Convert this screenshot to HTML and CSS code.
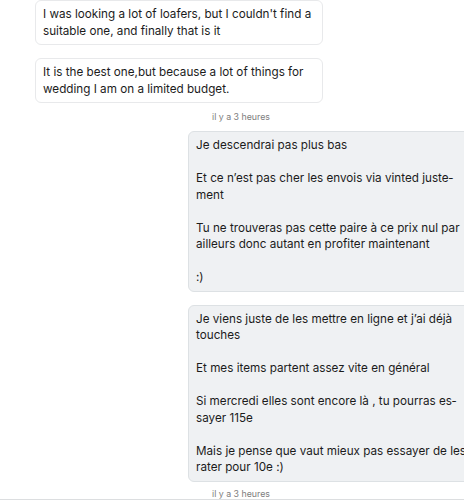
FILE: index.html
```html
<!DOCTYPE html>
<html lang="fr">
<head>
    <meta charset="UTF-8">
    <meta name="viewport" content="width=device-width, initial-scale=1.0">
    <title>Conversation</title>
    <link rel="stylesheet" href="styles.css">
</head>
<body>
    <div class="chat">
        <div class="group group-in">
            <div class="bubble bubble-in" lang="en">I was looking a lot of loafers, but I couldn't find a suitable one, and finally that is it</div>
            <div class="bubble bubble-in" lang="en">It is the best one,but because a lot of things for wedding I am on a limited budget.</div>
        </div>
        <div class="time">il y a 3 heures</div>

        <div class="group group-out">
            <div class="bubble bubble-out">Je descendrai pas plus bas<br><br>Et ce n’est pas cher les envois via vinted juste&shy;ment<br><br>Tu ne trouveras pas cette paire à ce prix nul par ailleurs donc autant en profiter maintenant<br><br>:)</div>
            <div class="bubble bubble-out">Je viens juste de les mettre en ligne et j’ai déjà touches<br><br>Et mes items partent assez vite en général<br><br>Si mercredi elles sont encore là , tu pourras es&shy;sayer 115e<br><br>Mais je pense que vaut mieux pas essayer de les rater pour 10e :)</div>
        </div>
        <div class="time time-last">il y a 3 heures</div>
    </div>
    <div class="footer"></div>
</body>
</html>
```

FILE: styles.css
```css
body {
    font-family: Inter, "Noto Sans", sans-serif;
    margin: 0;
    padding: 0;
    background: #ffffff;
    color: #1c1c1c;
    overflow: hidden;
    width: 464px;
    height: 500px;
}
.chat {
    border-top: 1px solid #e4e6e8;
    margin-top: -1px;
}
.group {
    display: flex;
    flex-direction: column;
    gap: 13px;
}
.group-in {
    padding-left: 35px;
}
.group-out {
    padding-left: 188px;
    margin-top: 8px;
}
.bubble {
    width: 288px;
    box-sizing: border-box;
    padding: 5px 7px;
    border-radius: 6px;
    font-size: 11.7px;
    line-height: 16.5px;
    flex-shrink: 0;
}
.bubble-in {
    background: #ffffff;
    border: 1px solid #e8e9eb;
}
.bubble-out {
    background: #eff1f3;
    border: 1px solid #dde1e4;
}
.time {
    margin-top: 8px;
    padding-left: 212px;
    font-size: 8.8px;
    line-height: 12px;
    color: #7d7d7d;
}
.time-last {
    margin-top: 7px;
    line-height: 10px;
}
.footer {
    border-top: 1px solid #dcdee0;
}
```
